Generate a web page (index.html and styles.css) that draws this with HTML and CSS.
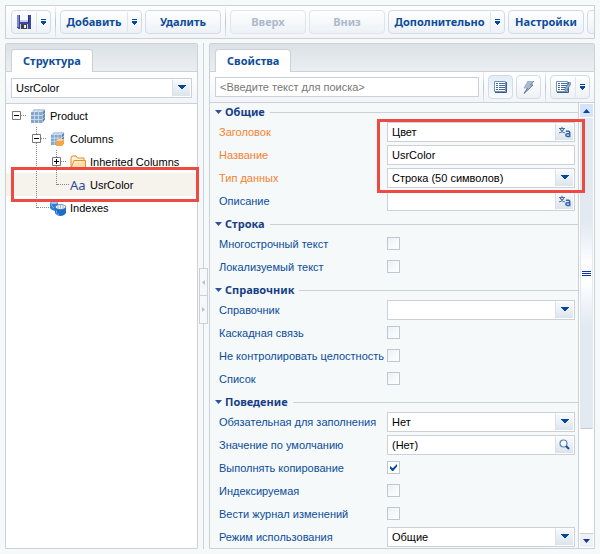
FILE: index.html
```html
<!DOCTYPE html>
<html lang="ru">
<head>
<meta charset="utf-8">
<title>UsrColor</title>
<link rel="stylesheet" href="styles.css">
</head>
<body>
<svg class="defs" aria-hidden="true">
  <symbol id="menu" viewBox="0 0 5 6"><path d="M0 0h5v1H0zM0 2h5v1H0zM0 3h5v1H0zM1 4h3v1H1zM2 5h1v1H2z" fill="#04489b"/></symbol>
  <symbol id="down" viewBox="0 0 8 5"><path d="M0 0h8v1H7v1H6v1H5v1H3V3H2V2H1V1H0z" fill="#04489b"/></symbol>
  <symbol id="lang" viewBox="0 0 12 12">
    <path d="M0 2.500h6M3 .8v1.700M1.200 3C2 5 3.500 6.300 5.800 7M4.800 3C4 5 2.500 6.300.2 7" fill="none" stroke="#47709f" stroke-width="1.100"/>
    <path d="M6.800 5.200h2.700q1.200 0 1.200 1.200V11M10.700 7.700H8.200a1.300 1.300 0 0 0 0 2.700h2.500" fill="none" stroke="#2f66a8" stroke-width="1.500"/>
  </symbol>
  <symbol id="cube" viewBox="0 0 16 16">
    <path d="M1 4 4 1h11v10l-3 4H1z" fill="#dbe7f4"/>
    <path d="M4.500 1h2.700L5 3.300H2.200zM8 1h3L9 3.300H6zM11.800 1H15l-2.500 2.300H9.800z" fill="#b4cae3"/>
    <path d="M1 4h3.200v3.200H1zM4.900 4h3.200v3.200H4.900zM8.800 4H12v3.200H8.800zM1 7.900h3.200v3.200H1zM4.900 7.900h3.200v3.200H4.900zM8.800 7.900H12v3.200H8.800zM1 11.800h3.200V15H1zM4.900 11.800h3.200V15H4.900zM8.800 11.800H12V15H8.800z" fill="#85a6cd"/>
    <path d="M12.500 4 15 1.800v3L12.500 7zM12.500 7.900 15 5.500v2.800l-2.500 2.600zM12.500 11.800 15 9v2.600L12.500 14.800z" fill="#5b82b4"/>
  </symbol>
  <symbol id="minus" viewBox="0 0 9 9"><path d="M.5.5h8v8h-8z" fill="#fff" stroke="#777"/><path d="M2 4h5v1H2z" fill="#000"/></symbol>
  <symbol id="plus" viewBox="0 0 9 9"><path d="M.5.5h8v8h-8z" fill="#fff" stroke="#777"/><path d="M2 4h5v1H2zM4 2h1v5H4z" fill="#000"/></symbol>
  <symbol id="list" viewBox="0 0 13 12">
    <path d="M.5.5h11v10H.5z" fill="#fff" stroke="#7791b2"/><path d="M1 11.500h11.500V1" fill="none" stroke="#3c5f92"/>
    <path d="M2 2h2v1H2zM2 4h2v1H2zM2 6h2v1H2zM2 8h2v1H2zM5 2h6v1H5zM5 4h6v1H5zM5 6h6v1H5zM5 8h6v1H5z" fill="#416a9e"/>
  </symbol>
</svg>

<div class="toolbar main-toolbar">
  <div class="btn split save">
    <button type="button" aria-label="Сохранить">
      <svg width="14" height="14" viewBox="0 0 14 14"><path d="M0 0h14v14H1.500L0 12.500z" fill="#3d48a5"/><path d="M0 0h2v12H0z" fill="#7f86cf"/><path d="M3 0h8v7H3z" fill="#f5f8fd"/><path d="M3 5h8v2H3z" fill="#c4cfe9"/><path d="M3 9h8v5H3z" fill="#c9c9ca"/><path d="M4 9h6v5H4z" fill="#40434b"/><path d="M7 10h2v3H7z" fill="#eef2f5"/><path d="M11 0h1v8h-1z" fill="#252d7d"/></svg>
    </button>
    <button type="button" class="more" aria-label="Ещё"><svg width="5" height="6"><use href="#menu"/></svg></button>
  </div>
  <span class="sep"></span>
  <div class="btn split add">
    <button type="button">Добавить</button>
    <button type="button" class="more" aria-label="Ещё"><svg width="5" height="6"><use href="#menu"/></svg></button>
  </div>
  <button type="button" class="btn wide">Удалить</button>
  <span class="sep"></span>
  <button type="button" class="btn wide" disabled>Вверх</button>
  <button type="button" class="btn wide" disabled>Вниз</button>
  <div class="btn split extra">
    <button type="button">Дополнительно</button>
    <button type="button" class="more" aria-label="Ещё"><svg width="5" height="6"><use href="#menu"/></svg></button>
  </div>
  <button type="button" class="btn wide">Настройки</button>
  <button type="button" class="btn wide" aria-label="Далее"></button>
</div>

<main class="workspace">
  <section class="panel">
    <div class="tabs"><button type="button" class="tab">Структура</button></div>
    <div class="toolbar panel-toolbar">
      <div class="field">
        <select aria-label="Схема"><option>UsrColor</option></select>
        <span class="trigger"><svg width="8" height="5"><use href="#down"/></svg></span>
      </div>
    </div>
    <ul class="tree">
      <li>
        <div class="node"><svg class="toggle"><use href="#minus"/></svg><span class="stub"></span><svg class="icon"><use href="#cube"/></svg>Product</div>
        <ul class="branch depth-1">
          <li>
            <div class="node"><svg class="toggle"><use href="#minus"/></svg><span class="stub"></span>
              <svg class="icon" viewBox="0 0 16 16"><use href="#cube" width="15" height="15"/><path d="M6 10l2-2h6v5l-2 2H6z" fill="#f6a445"/><path d="M6 10l2-2h6l-2 2z" fill="#ffd28f"/></svg>Columns</div>
            <ul class="branch depth-2">
              <li><div class="node"><svg class="toggle"><use href="#plus"/></svg><span class="stub"></span>
                <svg class="icon" viewBox="0 0 16 16"><path d="M1 14V3.500L2 2h4l1.500 2H14v3" fill="#fff0d6" stroke="#e08a28"/><path d="M1 14 4 6.500h11.500V14z" fill="#fddca6" stroke="#e5912e"/><path d="M3.500 12 5 8h9" fill="none" stroke="#fff5e2"/></svg>Inherited Columns</div></li>
              <li><div class="node selected"><span class="stub leaf"></span><span class="icon type">Aa</span>UsrColor</div></li>
            </ul>
          </li>
          <li><div class="node"><span class="stub leaf"></span>
            <svg class="icon" viewBox="0 0 16 16"><path d="M0 2v6q2 3 5 3l3-2V2z" fill="#2f7ad2"/><ellipse cx="4" cy="2.200" rx="4" ry="1.800" fill="#9cc6f0"/><path d="M1 4q1 3 3 4" fill="none" stroke="#7db8f0"/><path d="M5 7v6q2 3 5.500 3T16 13V7z" fill="#1f6cc6"/><ellipse cx="10.500" cy="7" rx="5.300" ry="2.500" fill="#f2f4f5" stroke="#2868af" stroke-width=".7"/><path d="M8 5.500v3M10.500 5v3.500M13 5.500v3" stroke="#8fa6bd" stroke-width=".8"/><path d="M6.500 10.500v2.500q1 1.200 2.500 1.500" fill="none" stroke="#68b2ef"/></svg>Indexes</div></li>
        </ul>
      </li>
    </ul>
  </section>

  <div class="splitter">
    <button type="button" aria-label="Свернуть влево"><svg width="3" height="5" viewBox="0 0 3 5"><path d="M3 0v5L0 2.500z" fill="#b9c2cc"/></svg></button>
    <button type="button" aria-label="Свернуть вправо"><svg width="3" height="5" viewBox="0 0 3 5"><path d="M0 0v5l3-2.500z" fill="#b9c2cc"/></svg></button>
  </div>

  <section class="panel">
    <div class="tabs"><button type="button" class="tab">Свойства</button></div>
    <div class="toolbar panel-toolbar properties-toolbar">
      <div class="field"><input type="text" aria-label="Поиск" placeholder="&lt;Введите текст для поиска&gt;"></div>
      <span class="sep"></span>
      <button type="button" class="btn square pressed" aria-label="Список"><svg width="13" height="12"><use href="#list"/></svg></button>
      <button type="button" class="btn square" aria-label="События"><svg width="12" height="13" viewBox="0 0 12 13"><path d="M5 0h6L7.500 4H10L1 12.500 4 7H1z" fill="#a9bbd1"/><path d="M11 0 7.500 4H10L1 12.500 4.500 7" fill="none" stroke="#5f7899"/><path d="M4 7H1L5 0h6" fill="none" stroke="#93a8c2" stroke-width=".8"/></svg></button>
      <span class="sep"></span>
      <div class="btn split modes">
        <button type="button" aria-label="Правка"><svg width="15" height="12" viewBox="0 0 15 12"><use href="#list" width="13" height="12"/><path d="M14 1 9 7v3l2-1 4-6z" fill="#91a9c8" stroke="#4f74a5" stroke-width=".6"/></svg></button>
        <button type="button" class="more" aria-label="Ещё"><svg width="5" height="6"><use href="#menu"/></svg></button>
      </div>
    </div>
    <div class="body">
      <form class="properties">
        <fieldset>
          <legend><svg width="7" height="4" viewBox="0 0 7 4"><path d="M0 0h7L3.500 4z" fill="#2b50a8"/></svg>Общие</legend>
          <div class="highlighted">
            <div class="row required"><label for="caption">Заголовок</label><div class="field"><input id="caption" type="text" value="Цвет"><button type="button" class="trigger" aria-label="Перевод"><svg width="12" height="12"><use href="#lang"/></svg></button></div></div>
            <div class="row required"><label for="name">Название</label><div class="field"><input id="name" type="text" value="UsrColor"></div></div>
            <div class="row required"><label for="type">Тип данных</label><div class="field"><select id="type"><option>Строка (50 символов)</option></select><span class="trigger"><svg width="8" height="5"><use href="#down"/></svg></span></div></div>
          </div>
          <div class="row"><label for="about">Описание</label><div class="field"><input id="about" type="text"><button type="button" class="trigger" aria-label="Перевод"><svg width="12" height="12"><use href="#lang"/></svg></button></div></div>
        </fieldset>
        <fieldset>
          <legend><svg width="7" height="4" viewBox="0 0 7 4"><path d="M0 0h7L3.500 4z" fill="#2b50a8"/></svg>Строка</legend>
          <div class="row"><label for="multi">Многострочный текст</label><input id="multi" type="checkbox"></div>
          <div class="row"><label for="local">Локализуемый текст</label><input id="local" type="checkbox"></div>
        </fieldset>
        <fieldset>
          <legend><svg width="7" height="4" viewBox="0 0 7 4"><path d="M0 0h7L3.500 4z" fill="#2b50a8"/></svg>Справочник</legend>
          <div class="row"><label for="lookup">Справочник</label><div class="field"><select id="lookup"><option></option></select><span class="trigger"><svg width="8" height="5"><use href="#down"/></svg></span></div></div>
          <div class="row"><label for="cascade">Каскадная связь</label><input id="cascade" type="checkbox"></div>
          <div class="row"><label for="integrity">Не контролировать целостность</label><input id="integrity" type="checkbox"></div>
          <div class="row"><label for="aslist">Список</label><input id="aslist" type="checkbox"></div>
        </fieldset>
        <fieldset>
          <legend><svg width="7" height="4" viewBox="0 0 7 4"><path d="M0 0h7L3.500 4z" fill="#2b50a8"/></svg>Поведение</legend>
          <div class="row"><label for="need">Обязательная для заполнения</label><div class="field"><select id="need"><option>Нет</option></select><span class="trigger"><svg width="8" height="5"><use href="#down"/></svg></span></div></div>
          <div class="row"><label for="default">Значение по умолчанию</label><div class="field"><input id="default" type="text" value="(Нет)"><button type="button" class="trigger" aria-label="Выбрать"><svg width="11" height="11" viewBox="0 0 11 11"><circle cx="4.500" cy="4.500" r="3.500" fill="#f8fbfe" stroke="#5f83b4" stroke-width="1.200"/><path d="M7 7l3 3" stroke="#174f9d" stroke-width="2"/></svg></button></div></div>
          <div class="row"><label for="copy">Выполнять копирование</label><input id="copy" type="checkbox" checked></div>
          <div class="row"><label for="indexed">Индексируемая</label><input id="indexed" type="checkbox"></div>
          <div class="row"><label for="journal">Вести журнал изменений</label><input id="journal" type="checkbox"></div>
          <div class="row"><label for="mode">Режим использования</label><div class="field"><select id="mode"><option>Общие</option></select><span class="trigger"><svg width="8" height="5"><use href="#down"/></svg></span></div></div>
        </fieldset>
      </form>
      <div class="scrollbar">
        <button type="button" aria-label="Вверх"><svg width="7" height="4" viewBox="0 0 7 4"><path d="M0 4h7L3.500 0z" fill="#0b41a5"/></svg></button>
        <div class="track"><div class="thumb"><svg width="9" height="5" viewBox="0 0 9 5"><path d="M0 0h9v1H0zM0 2h9v1H0zM0 4h9v1H0z" fill="#0637a0"/></svg></div></div>
        <button type="button" class="end" aria-label="Вниз"><svg width="7" height="4" viewBox="0 0 7 4"><path d="M0 0h7L3.500 4z" fill="#1b2e9b"/></svg></button>
      </div>
    </div>
  </section>
</main>
</body>
</html>
```
FILE: styles.css
```css
* { box-sizing: border-box; }

:root {
  --line: #ccd1d7;
  --soft: #d1dceb;
  --blue: #0c4c9a;
  --mark: #ee4a44;
  --heading: bold 11px/16px "Noto Sans", sans-serif;
}

body {
  display: flex;
  flex-direction: column;
  gap: 4px;
  height: 100vh;
  margin: 0;
  padding: 5px;
  overflow: hidden;
  background: #f5f9fa;
  color: #000;
  font: 11px/14px "Liberation Sans", sans-serif;
}

button, input, select { font: inherit; color: inherit; }
button { padding: 0; border: 0; background: none; }
svg { display: block; flex: none; }
.defs { position: absolute; width: 0; height: 0; }

/* Toolbars */
.toolbar {
  display: flex;
  align-items: center;
  gap: 3px;
  border: 1px solid var(--line);
  background: linear-gradient(#fff, #f3f4f8);
}
.main-toolbar {
  flex: none;
  height: 34px;
  padding: 0 5px;
  overflow: hidden;
}
.sep {
  flex: none;
  width: 1px;
  height: 30px;
  margin: 0 1px;
  background: linear-gradient(#eef2f7, #bac5d3, #e1e7ef);
}
.btn {
  display: flex;
  flex: none;
  align-items: center;
  justify-content: center;
  height: 24px;
  border: 1px solid var(--soft);
  border-radius: 4px;
  background: linear-gradient(#fff, #edf1f6);
  color: var(--blue);
  font: var(--heading);
  white-space: nowrap;
}
.btn.wide { width: 76px; }
.btn:disabled { border-color: #dde5ef; color: #abbacd; }
.split > button {
  display: flex;
  flex: 1;
  align-items: center;
  justify-content: center;
  height: 100%;
}
.split > .more {
  flex: none;
  width: 14px;
  height: 20px;
  border-left: 1px solid #dce5f0;
}
.save { width: 40px; }
.add { width: 82px; }
.extra { width: 117px; }
.modes { width: 40px; }
.square { width: 25px; }
.pressed { background: linear-gradient(#e1edf8, #f8fcff); }

/* Panels */
.workspace {
  display: grid;
  flex: 1;
  grid-template-columns: 193px 11px minmax(0, 1fr);
  min-height: 0;
}
.panel {
  display: flex;
  flex-direction: column;
  min-height: 0;
  border: 1px solid var(--line);
  border-radius: 2px 2px 0 0;
  background: #fff;
}
.tabs {
  display: flex;
  flex: none;
  align-items: flex-end;
  height: 28px;
  padding-left: 5px;
  background: linear-gradient(#dce1e7, #ebeff3);
  box-shadow: inset 0 -1px var(--line);
}
.tab {
  height: 23px;
  padding: 0 11px;
  border: 1px solid var(--line);
  border-bottom: 0;
  border-radius: 4px 4px 0 0;
  background: #fff;
  color: var(--blue);
  font: var(--heading);
}
.panel-toolbar {
  flex: none;
  height: 32px;
  padding: 0 5px;
  border-width: 0 0 1px;
}
.properties-toolbar { height: 31px; padding-right: 4px; }

/* Fields */
.field {
  display: grid;
  flex: 1;
  grid-template-columns: minmax(0, 1fr) auto;
  height: 20px;
  border: 1px solid var(--line);
  background: #fff;
}
.field input, .field select {
  grid-area: 1 / 1 / 2 / 3;
  width: 100%;
  min-width: 0;
  height: 18px;
  padding: 0 4px;
  border: 0;
  outline: 0;
  background: none;
  appearance: none;
}
.field input::placeholder { color: #777; opacity: 1; }
.trigger {
  display: flex;
  grid-area: 1 / 2;
  align-items: center;
  justify-content: center;
  width: 19px;
  height: 18px;
  border: 1px solid #fff;
  border-left-color: #d8e0ea;
  background: linear-gradient(#f9fbfc, #dbe3ec);
  pointer-events: none;
}

/* Tree */
.tree, .tree ul { margin: 0; padding: 0; list-style: none; }
.tree { --indent: 6px; }
.depth-1 { --indent: 26px; }
.depth-2 { --indent: 46px; }
.branch { position: relative; }
.branch::before {
  content: "";
  position: absolute;
  z-index: 1;
  top: 0;
  bottom: 11px;
  left: calc(var(--indent) + 4px);
  border-left: 1px dotted #888;
}
.node {
  display: flex;
  align-items: center;
  height: 23px;
  padding-left: var(--indent);
}
.toggle { position: relative; z-index: 2; width: 9px; height: 9px; }
.stub { width: 5px; margin-right: 4px; border-top: 1px dotted #888; }
.stub.leaf { width: 12px; margin: 0 1px 0 5px; }
.icon { width: 16px; height: 16px; margin-right: 4px; }
.type { color: #2d4a96; font: 13px/16px "Noto Sans", sans-serif; }
.selected { position: relative; background: #f6f2ec; }
.selected::after, .highlighted::after {
  content: "";
  position: absolute;
  z-index: 3;
  border: 3px solid var(--mark);
  pointer-events: none;
}
.selected::after { inset: -6px -2px -6px 5px; }

/* Splitter */
.splitter {
  display: flex;
  flex-direction: column;
  justify-content: center;
  align-items: center;
  background: linear-gradient(90deg, #f5f9fa 5px, var(--line) 5px, var(--line) 6px, #f5f9fa 6px);
}
.splitter button {
  display: flex;
  align-items: center;
  justify-content: center;
  width: 9px;
  height: 28px;
  border: 1px solid var(--line);
  background: #f5f7fa;
}
.splitter button + button { border-top: 0; }

/* Properties */
.body {
  display: flex;
  flex: 1;
  min-height: 0;
  background: #f5f9fa;
}
.properties { flex: 1; min-width: 0; padding-top: 1px; }
fieldset { min-width: 0; margin: 0 0 4px; padding: 0; border: 0; }
legend {
  display: flex;
  align-items: center;
  gap: 3px;
  width: 100%;
  height: 16px;
  padding: 0 0 0 5px;
  color: #173e87;
  font: var(--heading);
}
legend::after {
  content: "";
  flex: 1;
  height: 1px;
  margin-left: 2px;
  background: var(--line);
}
.highlighted { position: relative; }
.highlighted::after { inset: -1px -7px -4px 167px; }
.row {
  display: flex;
  align-items: center;
  height: 23px;
  padding: 0 3px 0 9px;
}
.row label { flex: none; width: 168px; color: #0c4c9a; white-space: nowrap; }
.row.required label { color: #f5802f; }
input[type="checkbox"] {
  display: grid;
  place-items: center;
  width: 13px;
  height: 13px;
  margin: 0;
  border: 1px solid #bfc8d2;
  background: linear-gradient(135deg, #edf1f6, #fff);
  appearance: none;
}
input[type="checkbox"]:checked { background: #fff; }
input[type="checkbox"]:checked::before {
  content: "";
  width: 7px;
  height: 7px;
  background: #04489b;
  clip-path: polygon(0 30%, 40% 60%, 100% 0, 100% 35%, 45% 100%, 30% 100%, 0 65%);
}

/* Scrollbar */
.scrollbar {
  display: flex;
  flex-direction: column;
  width: 16px;
  border-left: 1px solid var(--line);
  background: #fff;
}
.scrollbar button {
  display: flex;
  flex: none;
  align-items: center;
  justify-content: center;
  height: 15px;
  border: 1px solid #fff;
  background: #d5e3fb;
}
.scrollbar .end { border-top-color: var(--line); background: #edf2f7; }
.track { flex: 1; padding: 0 1px; }
.thumb {
  display: flex;
  align-items: center;
  justify-content: center;
  height: 75%;
  border: 1px solid #e2e7ee;
  border-bottom-color: #c3cdd8;
  background: linear-gradient(#e2e9f1 33%, #fbfdff 46%, #fbfdff 54%, #e2e9f1 67%);
}
```
